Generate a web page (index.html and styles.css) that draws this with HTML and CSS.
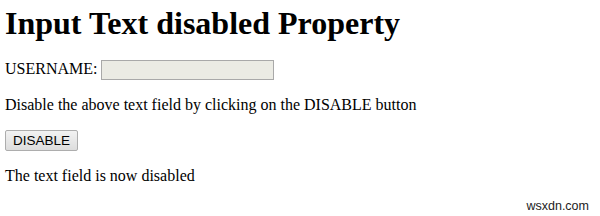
FILE: index.html
```html
<!DOCTYPE html>
<html lang="en">
<head>
    <meta charset="UTF-8">
    <title>Input Text disabled Property</title>
    <link rel="stylesheet" href="styles.css">
</head>
<body>
    <h1>Input Text disabled Property</h1>
    <div class="field">
        USERNAME: <input type="text" id="username" disabled>
    </div>
    <p>Disable the above text field by clicking on the DISABLE button</p>
    <button class="btn" onclick="disableText()">DISABLE</button>
    <p id="sample">The text field is now disabled</p>
    <div class="watermark">wsxdn.com</div>

    <script>
        function disableText() {
            document.getElementById('username').disabled = true;
            document.getElementById('sample').textContent = 'The text field is now disabled';
        }
    </script>
</body>
</html>
```

FILE: styles.css
```css
body {
    margin: 5px;
    font-family: "Liberation Serif", "Times New Roman", serif;
    font-size: 16px;
    color: #000;
    background: white;
    position: relative;
    height: 206px;
}

h1 {
    font-size: 32px;
    margin: 0 0 18px 0;
    line-height: 37px;
}

.field {
    margin: 0;
}

.field input {
    width: 167px;
    height: 16px;
    padding: 1px 2px;
    border: 1px solid #a9a9a9;
    background: #ebebe4;
    vertical-align: middle;
}

p {
    margin: 16px 0;
}

.btn {
    font-family: "Liberation Sans", Arial, sans-serif;
    font-size: 13.5px;
    padding: 2px 7px;
    border: 1px solid #adadad;
    border-radius: 2px;
    background: linear-gradient(#f2f2f2, #dddddd);
    color: #000;
}

.watermark {
    position: absolute;
    right: 6px;
    bottom: -2px;
    font-family: "Liberation Sans", Arial, sans-serif;
    font-size: 12.5px;
    color: #222;
}
```
